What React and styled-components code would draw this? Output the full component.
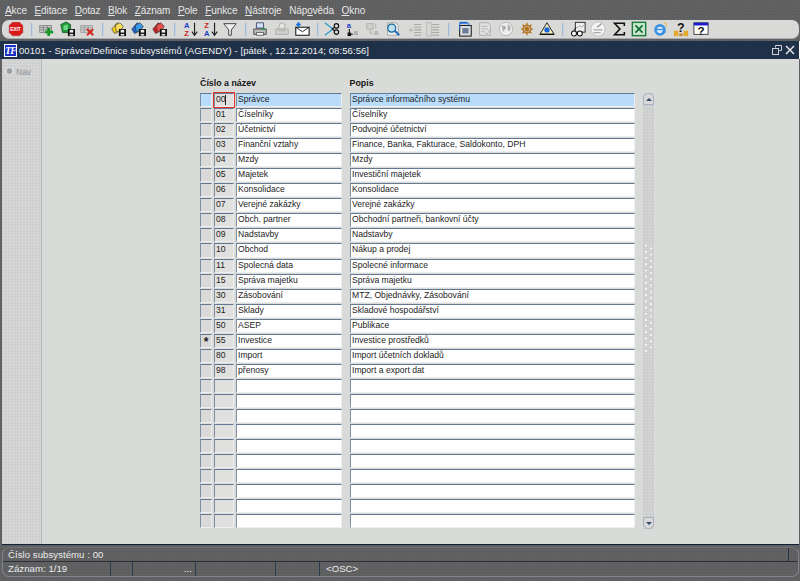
import React from "react";
import styled, { createGlobalStyle } from "styled-components";

const Global = createGlobalStyle`
  html, body { margin: 0; padding: 0; background: #5e5e5e; overflow: hidden; }
  * { box-sizing: border-box; }
`;
const FONT = `"Liberation Sans", Arial, sans-serif`;
const DITHER = `radial-gradient(circle at 1px 1px, rgba(110,115,125,.5) .6px, transparent .8px)`;
const DITHER_LIGHT = `radial-gradient(circle at 1px 1px, rgba(150,158,170,.28) .6px, transparent .8px)`;

const Page = styled.div`
  width: 800px; height: 581px; display: flex; flex-direction: column;
  font-family: ${FONT}; background-color: #5e5e5e; background-image: ${DITHER}; background-size: 3px 3px;
`;
const MenuBar = styled.nav`
  height: 20px; display: flex; align-items: center; padding: 1px 0 0 5px; gap: 7.65px;
  font-size: 10px; letter-spacing: -.1px; color: #e6e6e6;
  u { text-underline-offset: 1px; }
`;
const Toolbar = styled.div`
  height: 19px; margin: 0 1px 0 2px; display: flex; align-items: center; padding-left: 6px;
  background: #d9dad7; border-radius: 7px; border-bottom: 1px solid #a9acb0;
`;
const ToolSlot = styled.span`
  flex: none; display: flex; align-items: center; height: 18px; width: ${p => p.$w}px;
  svg { display: block; flex: none; }
`;
const ToolSep = styled.i`
  display: block; width: 2px; height: 13px; margin-left: 7px; background: #c4d4e6; border-left: 1px solid #a3b9d2;
`;
const TitleBar = styled.header`
  height: 18px; margin-top: 2px; background: #1f3149; display: flex; align-items: center;
  padding: 0 4px 0 4px; color: #f0f0f0; font-size: 9.55px; letter-spacing: .06px; border-right: 1px solid #fff;
`;
const TitleLogo = styled.span`
  width: 13px; height: 13px; flex: none; margin-right: 2px; background: #1c2fc4; border: 1px solid #fff; display: flex;
  align-items: center; justify-content: center; color: #fff; font: italic bold 10px "Liberation Serif", serif; letter-spacing: -1px;
`;
const TitleText = styled.span` flex: 1; white-space: nowrap; `;
const WinButtons = styled.span`
  display: flex; align-items: center; gap: 3px;
  svg { display: block; }
`;
const Body = styled.main`
  height: 486px; margin: 0 1px 0 2px; display: flex; background: #d9dbd8; border-bottom: 1px solid #12203a;
`;
const NavPanel = styled.aside`
  width: 40px; flex: none; padding: 7px 0 0 3px; display: flex; align-items: flex-start; gap: 2px;
  background-color: #d5d6d5; background-image: ${DITHER_LIGHT}; background-size: 3px 3px;
  border-right: 1px solid #b4b9c0; color: #8f959c; font-size: 8.5px; line-height: 12px;
`;
const NavLabel = styled.span` flex: none; `;
const FormArea = styled.section`
  flex: 1; padding: 19px 0 0 158px; display: flex; gap: 8px; align-items: flex-start;
`;
const Blockwrap = styled.div` display: flex; flex-direction: column; `;
const HeadRow = styled.div`
  height: 15px; display: grid; grid-template-columns: 149.5px 285px; font-size: 8.85px; font-weight: bold; line-height: 11px; color: #161616;
`;
const Rows = styled.div` display: grid; grid-auto-rows: 15.05px; width: 435px; `;
const Row = styled.div`
  display: grid; grid-template-columns: 12px 20px 106px 285px; column-gap: 2px; position: relative; padding-bottom: 1px;
  & > :nth-child(4) { margin-left: 6px; width: 285px; }
`;
const Cell = styled.div`
  border-top: 1px solid #647892; border-left: 1px solid #7d8ea5; border-right: 1px solid #eceeef; border-bottom: 1px solid #eceeef;
  background: ${p => p.$selected ? "#b9dcfa" : p.$kind === "marker" ? "#d9dad8" : p.$kind === "code" ? "#e0e0de" : "#fff"};
  font-size: ${p => p.$kind === "marker" ? "12px" : "8.6px"}; line-height: ${p => p.$kind === "marker" ? "14px" : "10.5px"};
  font-weight: ${p => p.$kind === "marker" ? "bold" : "normal"}; color: #1c1c1c; padding-left: ${p => p.$kind === "marker" ? 0 : "1px"};
  white-space: nowrap; overflow: hidden; text-align: ${p => p.$kind === "marker" ? "center" : "left"};
  position: relative;
`;
const ActiveFrame = styled.div`
  position: absolute; left: 13px; top: -1px; width: 22px; height: 16px; border: 1px solid #e2302f; pointer-events: none;
  &::after { content: ""; position: absolute; left: 11px; top: 2px; width: 1px; height: 10px; background: #222; }
`;
const Scrollbar = styled.div`
  width: 11px; height: 436px; margin-top: 15px; display: flex; flex-direction: column;
  background-color: #d3d3d3; background-image: ${DITHER_LIGHT}; background-size: 3px 3px;
`;
const ScrollBtn = styled.div`
  height: ${p => p.$h}px; flex: none; background: #d9dad8; border: 1px solid #a7afc2;
  border-radius: ${p => p.$up ? "5px 5px 0 0" : "0 0 5px 5px"};
  display: flex; align-items: center; justify-content: center;
  &::before { content: ""; width: 0; height: 0; border-left: 3px solid transparent; border-right: 3px solid transparent;
    ${p => p.$up ? "border-bottom: 3px solid #334a6e;" : "border-top: 3px solid #334a6e;"} }
`;
const ScrollTrack = styled.div` flex: 1; padding-top: 139px; `;
const Grip = styled.div`
  height: 109px; margin: 0 1px 0 2px; background-image:
    radial-gradient(circle at 1px 1.5px, #f4f5fa 1px, transparent 1.2px),
    radial-gradient(circle at 6px 4.5px, #f4f5fa 1px, transparent 1.2px);
  background-size: 8px 6.2px;
`;
const StatusArea = styled.footer`
  margin: 2px 1px 0 2px; height: 30px; border: 1px solid #84868f; border-top-color: #6f7078; border-radius: 7px;
  display: flex; flex-direction: column; color: #ececec; font-size: 9.6px; letter-spacing: .05px;
`;
const StatusTop = styled.div`
  height: 14px; display: flex; align-items: center; justify-content: space-between; padding-left: 5px; border-bottom: 1px solid #2c3038;
`;
const StatusEdge = styled.i` display: block; width: 1px; height: 13px; background: #24304a; margin-right: 9px; `;
const StatusBottom = styled.div` flex: 1; display: flex; align-items: stretch; `;
const StatusCell = styled.div`
  width: ${p => p.$w}px; flex: none; padding-left: ${p => p.$pl || 0}px; border-right: ${p => p.$bare ? "none" : "1px solid #2a3a55"};
  line-height: 13px; text-align: ${p => p.$right ? "right" : "left"}; padding-right: ${p => p.$right ? 3 : 0}px; white-space: nowrap;
`;

const Grid = ({ c = "#777" }) => <g stroke={c} strokeWidth=".8" fill="#c9cbc9"><rect x="2" y="5" width="13" height="8" /><path d="M2 7.5h13M2 10h13M6 5v8M10.500 5v8" fill="none" /></g>;
const Save = () => <g><rect x="10" y="9" width="8" height="8" fill="#111" /><rect x="12" y="10" width="4" height="3" fill="#eee" /><rect x="12" y="14.500" width="4" height="2" fill="#ddd" /></g>;
const Cards = ({ a, b }) => <g><path d="M2 9 8 2l5 3-5 8-3 1z" fill={a} stroke="#333" strokeWidth=".7" /><path d="M6 5l5-3 4 4-4 6H7z" fill={b} stroke="#333" strokeWidth=".7" /></g>;
const Doc = ({ c = "#666", f = "#eee" }) => <path d="M3 2h9l3 3v11H3z" fill={f} stroke={c} strokeWidth=".9" />;
const Lines = ({ c = "#999" }) => <path d="M8 4h8M8 7h8M8 10h8M8 13h8M8 16h8" stroke={c} strokeWidth="1.2" />;
const T = ({ x, y, c = "#111", s = 8, b = true, f = FONT, children }) => <text x={x} y={y} fill={c} fontSize={s} fontWeight={b ? "bold" : "normal"} fontFamily={f}>{children}</text>;

const ICONS = {
  exit: <g><path d="M5 1h8l4 4v8l-4 4H5l-4-4V5z" fill="#d81a1a" stroke="#bbb" strokeWidth=".6" /><T x="2.400" y="10.800" c="#fff" s="5.400">EXIT</T></g>,
  add: <g><Grid /><path d="M12 8v9M8 12.500h9" stroke="#159a2a" strokeWidth="3" /></g>,
  gsave: <g><path d="M2 4l6-3 5 3v9H4z" fill="#1c9a3a" stroke="#0b4a18" strokeWidth=".8" /><path d="M5 5l5-1v6H5z" fill="#6fd68a" /><Save /></g>,
  del: <g><Grid c="#999" /><path d="M9 9l7 7M16 9l-7 7" stroke="#d6261e" strokeWidth="2.200" /></g>,
  ysave: <g><Cards a="#f4c81c" b="#f6dc5a" /><Save /></g>,
  bsave: <g><Cards a="#1f63d8" b="#3a9ae8" /><Save /></g>,
  rsave: <g><Cards a="#c92222" b="#e4504a" /><Save /></g>,
  az: <g><T x="1" y="8" c="#1b3ec4" s="8.500">A</T><T x="1.500" y="17" c="#c22" s="8.500">Z</T><path d="M13 2v13M10 12l3 4 3-4" stroke="#222" fill="none" strokeWidth="1.300" /></g>,
  za: <g><T x="1.500" y="8" c="#c22" s="8.500">Z</T><T x="1" y="17" c="#1b3ec4" s="8.500">A</T><path d="M13 2v13M10 12l3 4 3-4" stroke="#222" fill="none" strokeWidth="1.300" /></g>,
  filter: <path d="M2 3h14l-5.500 7v6h-3v-6z" fill="#eee" stroke="#333" strokeWidth="1" />,
  print: <g><path d="M5 2h8v6H5z" fill="#cfe0f7" stroke="#224" strokeWidth=".8" /><path d="M2 9h14v6H2z" fill="#bbb" stroke="#222" strokeWidth=".8" /><path d="M5 13h8v3H5z" fill="#fff" stroke="#222" strokeWidth=".7" /><path d="M11 9h4" stroke="#1a9e3c" strokeWidth="1.500" /></g>,
  printg: <g opacity=".6"><path d="M7 2l6 2-2 5H5z" fill="#eee" stroke="#777" strokeWidth=".8" /><path d="M2 9h14v6H2z" fill="#ccc" stroke="#777" strokeWidth=".8" /><path d="M5 11h8" stroke="#888" /></g>,
  mail: <g><path d="M2 7h15v9H2z" fill="#fff" stroke="#111" strokeWidth="1.200" /><path d="M2 7l7.500 5L17 7" fill="none" stroke="#111" /><path d="M5 1.500v5M2.500 4h5" stroke="#0f6fe0" strokeWidth="2" /></g>,
  cut: <g fill="none" stroke="#111" strokeWidth="1.300"><path d="M1 2l9 7M1 16l9-7" stroke="#2f9fc4" strokeWidth="1.500" /><circle cx="14" cy="5.500" r="2.500" /><circle cx="14" cy="12.500" r="2.500" /><path d="M9 9l3-2M9 9l3 2" /></g>,
  copy: <g><T x="3" y="8" c="#1b3ec4" s="8.500">a</T><path d="M6 9v6h4" stroke="#111" fill="none" strokeWidth="1.200" /><rect x="4" y="13" width="4" height="4" fill="#111" /><T x="11" y="16" c="#999" s="8">a</T></g>,
  copyg: <g opacity=".55"><rect x="2" y="3" width="7" height="6" fill="#ccc" stroke="#888" /><T x="10" y="16" c="#888" s="9">a</T><path d="M6 9v5h3M12 3v5" stroke="#888" fill="none" /></g>,
  find: <g><Doc c="#999" /><circle cx="7.500" cy="8" r="4.500" fill="#bde1f2" stroke="#1f6f9f" strokeWidth="1.500" /><path d="M11 11l5 5" stroke="#2a6fb8" strokeWidth="2.400" /></g>,
  listg: <g opacity=".75"><Lines /><path d="M2 10h4M4 8l2 2-2 2" stroke="#999" fill="none" /></g>,
  listg2: <g opacity=".75"><Lines /><rect x="2" y="2" width="5" height="15" fill="none" stroke="#aaa" /></g>,
  docb: <g><rect x="3" y="5" width="13" height="12" fill="#ddd" stroke="#111" strokeWidth="1.100" /><path d="M3 2h9" stroke="#1565d8" strokeWidth="2" /><rect x="6" y="8" width="7" height="6" fill="#6a7d95" /><path d="M3 2v8M13 2v4" stroke="#1565d8" /></g>,
  docc: <g opacity=".7"><Doc c="#888" f="#e8e8e8" /><path d="M5 6h7M5 9h7M5 12h4" stroke="#999" /><path d="M9 13l2 2 4-5" stroke="#888" fill="none" /></g>,
  globe: <g opacity=".85"><circle cx="9" cy="9" r="7.500" fill="#f2f2f2" stroke="#aaa" /><path d="M4 6c3-2 5 0 5 2s-3 2-3 5M11 3c2 2 4 3 3 6s-2 3-3 1" fill="#a8a8a8" /></g>,
  bug: <g fill="none" stroke="#b06a10" strokeWidth="1.300"><circle cx="9" cy="9" r="4.500" /><path d="M9 2v14M2 9h14M4 4l10 10M14 4L4 14" /></g>,
  eye: <g><path d="M9 2L1 15h16z" fill="#f5eec0" stroke="#222" strokeWidth="1.100" /><circle cx="9" cy="10" r="3" fill="#1566d8" /><path d="M1 15h16" stroke="#111" strokeWidth="1.500" /></g>,
  glasses: <g><rect x="6" y="1.500" width="11" height="11" fill="#eee" stroke="#222" /><path d="M8 8l3-3 2 2 3-3" stroke="#999" fill="none" /><circle cx="4.500" cy="14" r="2.800" fill="#fff" stroke="#111" strokeWidth="1.200" /><circle cx="11" cy="14" r="2.800" fill="#fff" stroke="#111" strokeWidth="1.200" /><path d="M7 14h1.500M4 11l3-4" stroke="#111" /></g>,
  disc: <g><circle cx="9" cy="9" r="8" fill="#f3f3f3" stroke="#bbb" /><path d="M4 10h10M4 13h8" stroke="#a9a9a9" strokeWidth="1.300" /><path d="M8 7l5-4" stroke="#888" strokeWidth="1.300" /></g>,
  sigma: <path d="M15 5.500v-3H4l6 6.500-6 6.500h11v-3" fill="none" stroke="#111" strokeWidth="1.800" />,
  excel: <g><rect x="1.500" y="1.500" width="15" height="15" fill="#c9e6cd" stroke="#1c7a3c" strokeWidth="1.600" /><path d="M5 5l8 8M13 5l-8 8" stroke="#14713a" strokeWidth="2" /></g>,
  ie: <g><circle cx="9" cy="10" r="6.500" fill="#3d8fe0" /><circle cx="9" cy="10" r="3.500" fill="#dff0fb" /><path d="M5 9.500h8" stroke="#3d8fe0" strokeWidth="1.600" /><path d="M11 11.500h4v2h-4z" fill="#3d8fe0" /><path d="M13 3c3-2 4 0 3 3" fill="none" stroke="#e8b020" strokeWidth="1.100" /></g>,
  help: <g><T x="4.500" y="12" s="14">?</T><rect x="1" y="11" width="5" height="6" fill="#e4a82a" /><rect x="12" y="11" width="5" height="6" fill="#e4a82a" /><rect x="7" y="14" width="4" height="3" fill="#c83" /></g>,
  helpw: <g><rect x="1" y="2" width="16" height="13" fill="#fff" stroke="#333" /><rect x="1" y="2" width="16" height="3" fill="#1a1ad0" /><T x="5" y="16" s="13">?</T></g>,
};

const TOOLS = [
  [16, "exit", 1], [46, "add"], [67, "gsave"], [87, "del", 1], [118, "ysave"], [138, "bsave"], [159, "rsave", 1],
  [191, "az"], [211, "za"], [230, "filter", 1], [260, "print"], [282, "printg"], [302, "mail", 1],
  [332, "cut"], [352, "copy"], [373, "copyg"], [393, "find"], [415, "listg"], [433, "listg2", 1],
  [465, "docb"], [485, "docc"], [506, "globe"], [527, "bug"], [547, "eye", 1],
  [578, "glasses"], [598, "disc"], [619, "sigma"], [639, "excel"], [660, "ie"], [681, "help"], [701, "helpw"],
];

const MENUS = [["", "A", "kce"], ["", "E", "ditace"], ["", "D", "otaz"], ["", "B", "lok"], ["", "Z", "áznam"], ["", "P", "ole"], ["", "F", "unkce"], ["", "N", "ástroje"], ["Náp", "o", "věda"], ["", "O", "kno"]];

const DATA = [
  ["00", "Správce", "Správce informačního systému"],
  ["01", "Číselníky", "Číselníky"],
  ["02", "Účetnictví", "Podvojné účetnictví"],
  ["03", "Finanční vztahy", "Finance, Banka, Fakturace, Saldokonto, DPH"],
  ["04", "Mzdy", "Mzdy"],
  ["05", "Majetek", "Investiční majetek"],
  ["06", "Konsolidace", "Konsolidace"],
  ["07", "Verejné zakázky", "Verejné zakázky"],
  ["08", "Obch. partner", "Obchodní partneři, bankovní účty"],
  ["09", "Nadstavby", "Nadstavby"],
  ["10", "Obchod", "Nákup a prodej"],
  ["11", "Spolecná data", "Spolecné informace"],
  ["15", "Správa majetku", "Správa majetku"],
  ["30", "Zásobování", "MTZ, Objednávky, Zásobování"],
  ["31", "Sklady", "Skladové hospodářství"],
  ["50", "ASEP", "Publikace"],
  ["55", "Investice", "Investice prostředků"],
  ["80", "Import", "Import účetních dokladů"],
  ["98", "přenosy", "Import a export dat"],
  ...Array.from({ length: 10 }, () => ["", "", ""]),
];

export default function App() {
  return (
    <Page>
      <Global />
      <MenuBar>
        {MENUS.map(([a, b, c]) => <span key={b + c}>{a}<u>{b}</u>{c}</span>)}
      </MenuBar>
      <Toolbar>
        {TOOLS.map(([x, name, sep], i) => {
          const next = TOOLS[i + 1] ? TOOLS[i + 1][0] : x + 20;
          return (
            <ToolSlot key={name} $w={next - x}>
              <svg width="16" height="16" viewBox="0 0 18 18">{ICONS[name]}</svg>
              {sep ? <ToolSep /> : null}
            </ToolSlot>
          );
        })}
      </Toolbar>
      <TitleBar>
        <TitleLogo>TF</TitleLogo>
        <TitleText>00101 - Správce/Definice subsystémů (AGENDY) - [pátek , 12.12.2014; 08:56:56]</TitleText>
        <WinButtons>
          <svg width="10" height="10" viewBox="0 0 10 10" fill="none" stroke="#cfd3d8"><path d="M3.500 2.500V.5h6v5H7.500" /><rect x=".5" y="3.500" width="6" height="6" /></svg>
          <svg width="10" height="10" viewBox="0 0 10 10" stroke="#eee" strokeWidth="1.400"><path d="M1 1l8 8M9 1L1 9" /></svg>
        </WinButtons>
      </TitleBar>
      <Body>
        <NavPanel>
          <svg width="9" height="10" viewBox="0 0 9 10"><circle cx="4.500" cy="5" r="3.500" fill="#9aa0a6" stroke="#eee" /></svg>
          <NavLabel>Nav</NavLabel>
        </NavPanel>
        <FormArea>
          <Blockwrap>
            <HeadRow><span>Číslo a název</span><span>Popis</span></HeadRow>
            <Rows>
              {DATA.map(([code, name, desc], i) => (
                <Row key={i}>
                  <Cell $kind="marker" $selected={i === 0}>{code === "55" ? "*" : ""}</Cell>
                  <Cell $kind="code">{code}</Cell>
                  <Cell $selected={i === 0}>{name}</Cell>
                  <Cell $selected={i === 0}>{desc}</Cell>
                  {i === 0 ? <ActiveFrame /> : null}
                </Row>
              ))}
            </Rows>
          </Blockwrap>
          <Scrollbar>
            <ScrollBtn $up $h={12} />
            <ScrollTrack><Grip /></ScrollTrack>
            <ScrollBtn $h={12} />
          </Scrollbar>
        </FormArea>
      </Body>
      <StatusArea>
        <StatusTop><span>Číslo subsystému : 00</span><StatusEdge /></StatusTop>
        <StatusBottom>
          <StatusCell $w={108} $pl={5}>Záznam: 1/19</StatusCell>
          <StatusCell $w={22} />
          <StatusCell $w={63} $right>...</StatusCell>
          <StatusCell $w={80} />
          <StatusCell $w={44} />
          <StatusCell $w={60} $pl={6} $bare>&lt;OSC&gt;</StatusCell>
        </StatusBottom>
      </StatusArea>
    </Page>
  );
}
